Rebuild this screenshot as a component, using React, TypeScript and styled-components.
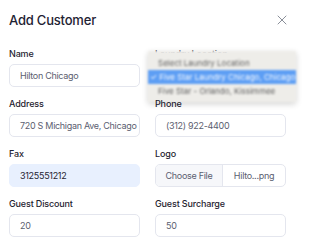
import React from "react";
import styled, {createGlobalStyle} from "styled-components";

const GlobalStyle = createGlobalStyle`
  body {
    margin: 0;
    background: #ffffff;
    font-family: Inter, "Noto Sans", sans-serif;
  }
`
const Modal = styled.div`
  width: 335px;
  height: 248px;
  padding: 0 9px;
  box-sizing: border-box;
  overflow: hidden;
`
const Header = styled.div`
  display: flex;
  align-items: center;
  justify-content: space-between;
  height: 40px;
  margin-bottom: 7px;
  padding-right: 39px;
`
const Title = styled.h2`
  margin: 0;
  font-size: 13px;
  font-weight: 500;
  color: #1e2233;
  letter-spacing: -0.2px;
`
const CloseButton = styled.button`
  border: none;
  background: none;
  padding: 0;
  display: flex;
  color: #8a8f99;
`
const Grid = styled.div`
  display: grid;
  grid-template-columns: 131px 131px;
  column-gap: 15px;
  row-gap: 10px;
`
const Field = styled.div`
  position: relative;
  display: flex;
  flex-direction: column;
`
const Label = styled.label`
  font-size: 9px;
  line-height: 14px;
  font-weight: 500;
  color: #1f2330;
  margin-bottom: 3px;
  letter-spacing: -0.15px;
`
const Input = styled.div<{ $filled?: boolean }>`
  height: 23px;
  box-sizing: border-box;
  border: 1px solid ${p => p.$filled ? '#e8f0fe' : '#e4e6ee'};
  background: ${p => p.$filled ? '#e8f0fe' : '#ffffff'};
  border-radius: 5px;
  padding: 0 10px;
  display: flex;
  align-items: center;
  font-size: 9px;
  color: ${p => p.$filled ? '#1f2330' : '#5b6070'};
  white-space: nowrap;
  overflow: hidden;
  letter-spacing: -0.3px;
`
const FileInput = styled.div`
  height: 23px;
  box-sizing: border-box;
  border: 1px solid #e4e6ee;
  border-radius: 5px;
  display: flex;
  overflow: hidden;
  font-size: 9px;
  color: #5b6070;
  letter-spacing: -0.3px;
`
const FileButton = styled.span`
  width: 66px;
  background: #f6f7fa;
  border-right: 1px solid #e4e6ee;
  display: flex;
  align-items: center;
  justify-content: center;
`
const FileName = styled.span`
  flex: 1;
  display: flex;
  align-items: center;
  justify-content: center;
`
const Menu = styled.div`
  position: absolute;
  left: -7px;
  top: 4px;
  width: 148px;
  height: 51px;
  padding-top: 5px;
  box-sizing: border-box;
  background: #eeede9;
  box-shadow: 0 2px 6px rgba(0, 0, 0, 0.18);
  filter: blur(1.3px);
  font-size: 8px;
  white-space: nowrap;
  overflow: hidden;
`
const MenuItem = styled.div<{ $active?: boolean }>`
  height: 14px;
  line-height: 14px;
  padding-left: ${p => p.$active ? '2px' : '10px'};
  background: ${p => p.$active ? '#5d9ef4' : 'transparent'};
  color: ${p => p.$active ? '#ffffff' : '#5e5e5e'};
`

const fields = [
    {label: 'Name', value: 'Hilton Chicago'},
    {label: 'Laundry Location', menu: true},
    {label: 'Address', value: '720 S Michigan Ave, Chicago'},
    {label: 'Phone', value: '(312) 922-4400'},
    {label: 'Fax', value: '3125551212', filled: true},
    {label: 'Logo', file: 'Hilto...png'},
    {label: 'Guest Discount', value: '20'},
    {label: 'Guest Surcharge', value: '50'},
]

export default function App() {
    return (
        <Modal>
            <GlobalStyle/>
            <Header>
                <Title>Add Customer</Title>
                <CloseButton aria-label="Close">
                    <svg width="10" height="10" viewBox="0 0 10 10" fill="none" stroke="currentColor"
                         strokeWidth="1" strokeLinecap="round">
                        <path d="M1 1L9 9M9 1L1 9"/>
                    </svg>
                </CloseButton>
            </Header>
            <Grid>
                {fields.map(f => (
                    <Field key={f.label}>
                        <Label>{f.label}</Label>
                        {f.menu ? (
                            <>
                                <Input/>
                                <Menu>
                                    <MenuItem>Select Laundry Location</MenuItem>
                                    <MenuItem $active>✓ Five Star Laundry Chicago, Chicago</MenuItem>
                                    <MenuItem>Five Star - Orlando, Kissimmee</MenuItem>
                                </Menu>
                            </>
                        ) : f.file ? (
                            <FileInput>
                                <FileButton>Choose File</FileButton>
                                <FileName>{f.file}</FileName>
                            </FileInput>
                        ) : (
                            <Input $filled={f.filled}>{f.value}</Input>
                        )}
                    </Field>
                ))}
            </Grid>
        </Modal>
    )
}
